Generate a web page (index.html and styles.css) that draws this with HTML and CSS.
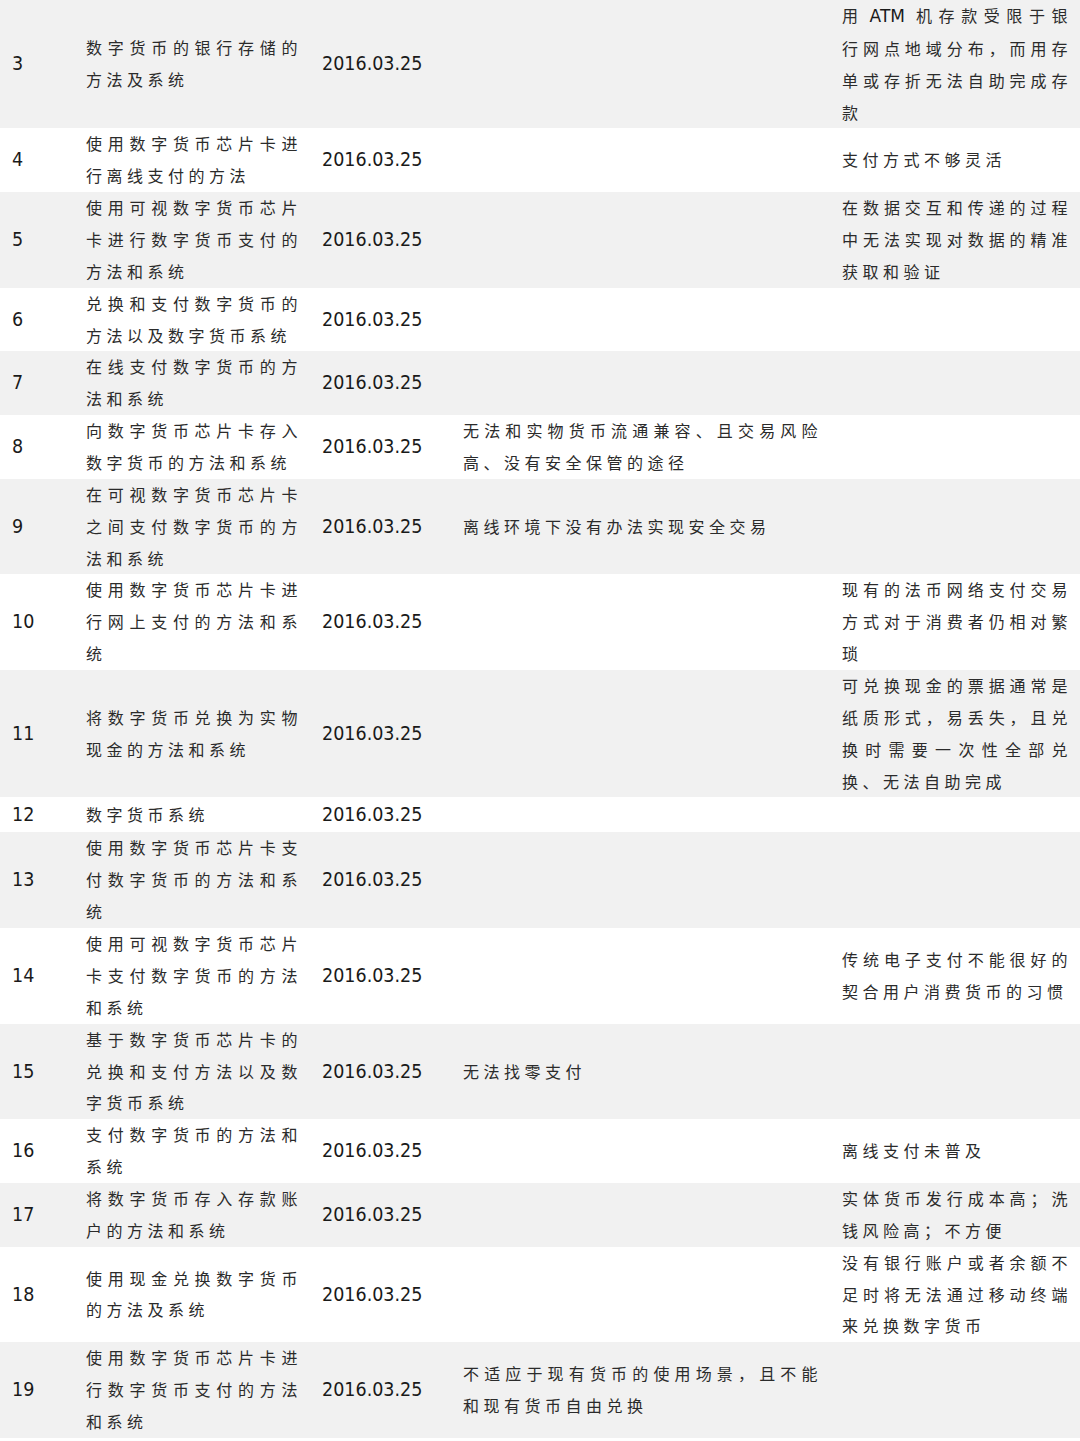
FILE: index.html
```html
<!DOCTYPE html>
<html lang="zh-CN">
<head>
<meta charset="utf-8">
<title>数字货币专利列表</title>
<link rel="stylesheet" href="styles.css">
</head>
<body>
<table class="patents">
  <colgroup>
    <col class="c-no"><col class="c-name"><col class="c-date"><col class="c-prob"><col class="c-issue">
  </colgroup>
  <tbody>
    <tr><td class="no">3</td><td class="txt">数字货币的银行存储的方法及系统</td><td class="date">2016.03.25</td><td class="txt"></td><td class="txt">用<span class="latin">ATM</span>机存款受限于银行网点地域分布，而用存单或存折无法自助完成存款</td></tr>
    <tr><td class="no">4</td><td class="txt">使用数字货币芯片卡进行离线支付的方法</td><td class="date">2016.03.25</td><td class="txt"></td><td class="txt">支付方式不够灵活</td></tr>
    <tr><td class="no">5</td><td class="txt">使用可视数字货币芯片卡进行数字货币支付的方法和系统</td><td class="date">2016.03.25</td><td class="txt"></td><td class="txt">在数据交互和传递的过程中无法实现对数据的精准获取和验证</td></tr>
    <tr><td class="no">6</td><td class="txt">兑换和支付数字货币的方法以及数字货币系统</td><td class="date">2016.03.25</td><td class="txt"></td><td class="txt"></td></tr>
    <tr><td class="no">7</td><td class="txt">在线支付数字货币的方法和系统</td><td class="date">2016.03.25</td><td class="txt"></td><td class="txt"></td></tr>
    <tr><td class="no">8</td><td class="txt">向数字货币芯片卡存入数字货币的方法和系统</td><td class="date">2016.03.25</td><td class="txt">无法和实物货币流通兼容、且交易风险高、没有安全保管的途径</td><td class="txt"></td></tr>
    <tr><td class="no">9</td><td class="txt">在可视数字货币芯片卡之间支付数字货币的方法和系统</td><td class="date">2016.03.25</td><td class="txt">离线环境下没有办法实现安全交易</td><td class="txt"></td></tr>
    <tr><td class="no">10</td><td class="txt">使用数字货币芯片卡进行网上支付的方法和系统</td><td class="date">2016.03.25</td><td class="txt"></td><td class="txt">现有的法币网络支付交易方式对于消费者仍相对繁琐</td></tr>
    <tr><td class="no">11</td><td class="txt">将数字货币兑换为实物现金的方法和系统</td><td class="date">2016.03.25</td><td class="txt"></td><td class="txt">可兑换现金的票据通常是纸质形式，易丢失，且兑换时需要一次性全部兑换、无法自助完成</td></tr>
    <tr class="single"><td class="no">12</td><td class="txt">数字货币系统</td><td class="date">2016.03.25</td><td class="txt"></td><td class="txt"></td></tr>
    <tr><td class="no">13</td><td class="txt">使用数字货币芯片卡支付数字货币的方法和系统</td><td class="date">2016.03.25</td><td class="txt"></td><td class="txt"></td></tr>
    <tr><td class="no">14</td><td class="txt">使用可视数字货币芯片卡支付数字货币的方法和系统</td><td class="date">2016.03.25</td><td class="txt"></td><td class="txt">传统电子支付不能很好的契合用户消费货币的习惯</td></tr>
    <tr><td class="no">15</td><td class="txt">基于数字货币芯片卡的兑换和支付方法以及数字货币系统</td><td class="date">2016.03.25</td><td class="txt">无法找零支付</td><td class="txt"></td></tr>
    <tr><td class="no">16</td><td class="txt">支付数字货币的方法和系统</td><td class="date">2016.03.25</td><td class="txt"></td><td class="txt">离线支付未普及</td></tr>
    <tr><td class="no">17</td><td class="txt">将数字货币存入存款账户的方法和系统</td><td class="date">2016.03.25</td><td class="txt"></td><td class="txt">实体货币发行成本高；洗钱风险高；不方便</td></tr>
    <tr><td class="no">18</td><td class="txt">使用现金兑换数字货币的方法及系统</td><td class="date">2016.03.25</td><td class="txt"></td><td class="txt">没有银行账户或者余额不足时将无法通过移动终端来兑换数字货币</td></tr>
    <tr><td class="no">19</td><td class="txt">使用数字货币芯片卡进行数字货币支付的方法和系统</td><td class="date">2016.03.25</td><td class="txt">不适应于现有货币的使用场景，且不能和现有货币自由兑换</td><td class="txt"></td></tr>
  </tbody>
</table>
</body>
</html>
```

FILE: styles.css
```css
html, body {
  margin: 0;
  padding: 0;
  background: #ffffff;
}

.patents {
  width: 1080px;
  table-layout: fixed;
  border-collapse: collapse;
  border-spacing: 0;
}

.c-no { width: 74px; }
.c-name { width: 236px; }
.c-date { width: 141px; }
.c-prob { width: 379px; }
.c-issue { width: 250px; }

.patents tr:nth-child(odd) {
  background: #f1f1f1;
}

.patents tr.single {
  height: 35px;
}

.patents td {
  padding: 0 8px 0 12px;
  vertical-align: middle;
  line-height: 31.86px;
}

.no, .date {
  font-family: "DejaVu Sans Condensed", "DejaVu Sans", sans-serif;
  font-stretch: condensed;
  font-size: 19.5px;
  color: #1a1a1a;
  white-space: nowrap;
}

.latin {
  font-family: "DejaVu Sans", sans-serif;
  font-size: 17px;
  letter-spacing: 0;
  color: #1a1a1a;
  margin: 0 9px 0 5px;
}

.txt {
  font-family: "Noto Sans CJK SC", sans-serif;
  font-size: 16px;
  letter-spacing: 4.5px;
  color: #2b2b2b;
  text-align: justify;
}
```
